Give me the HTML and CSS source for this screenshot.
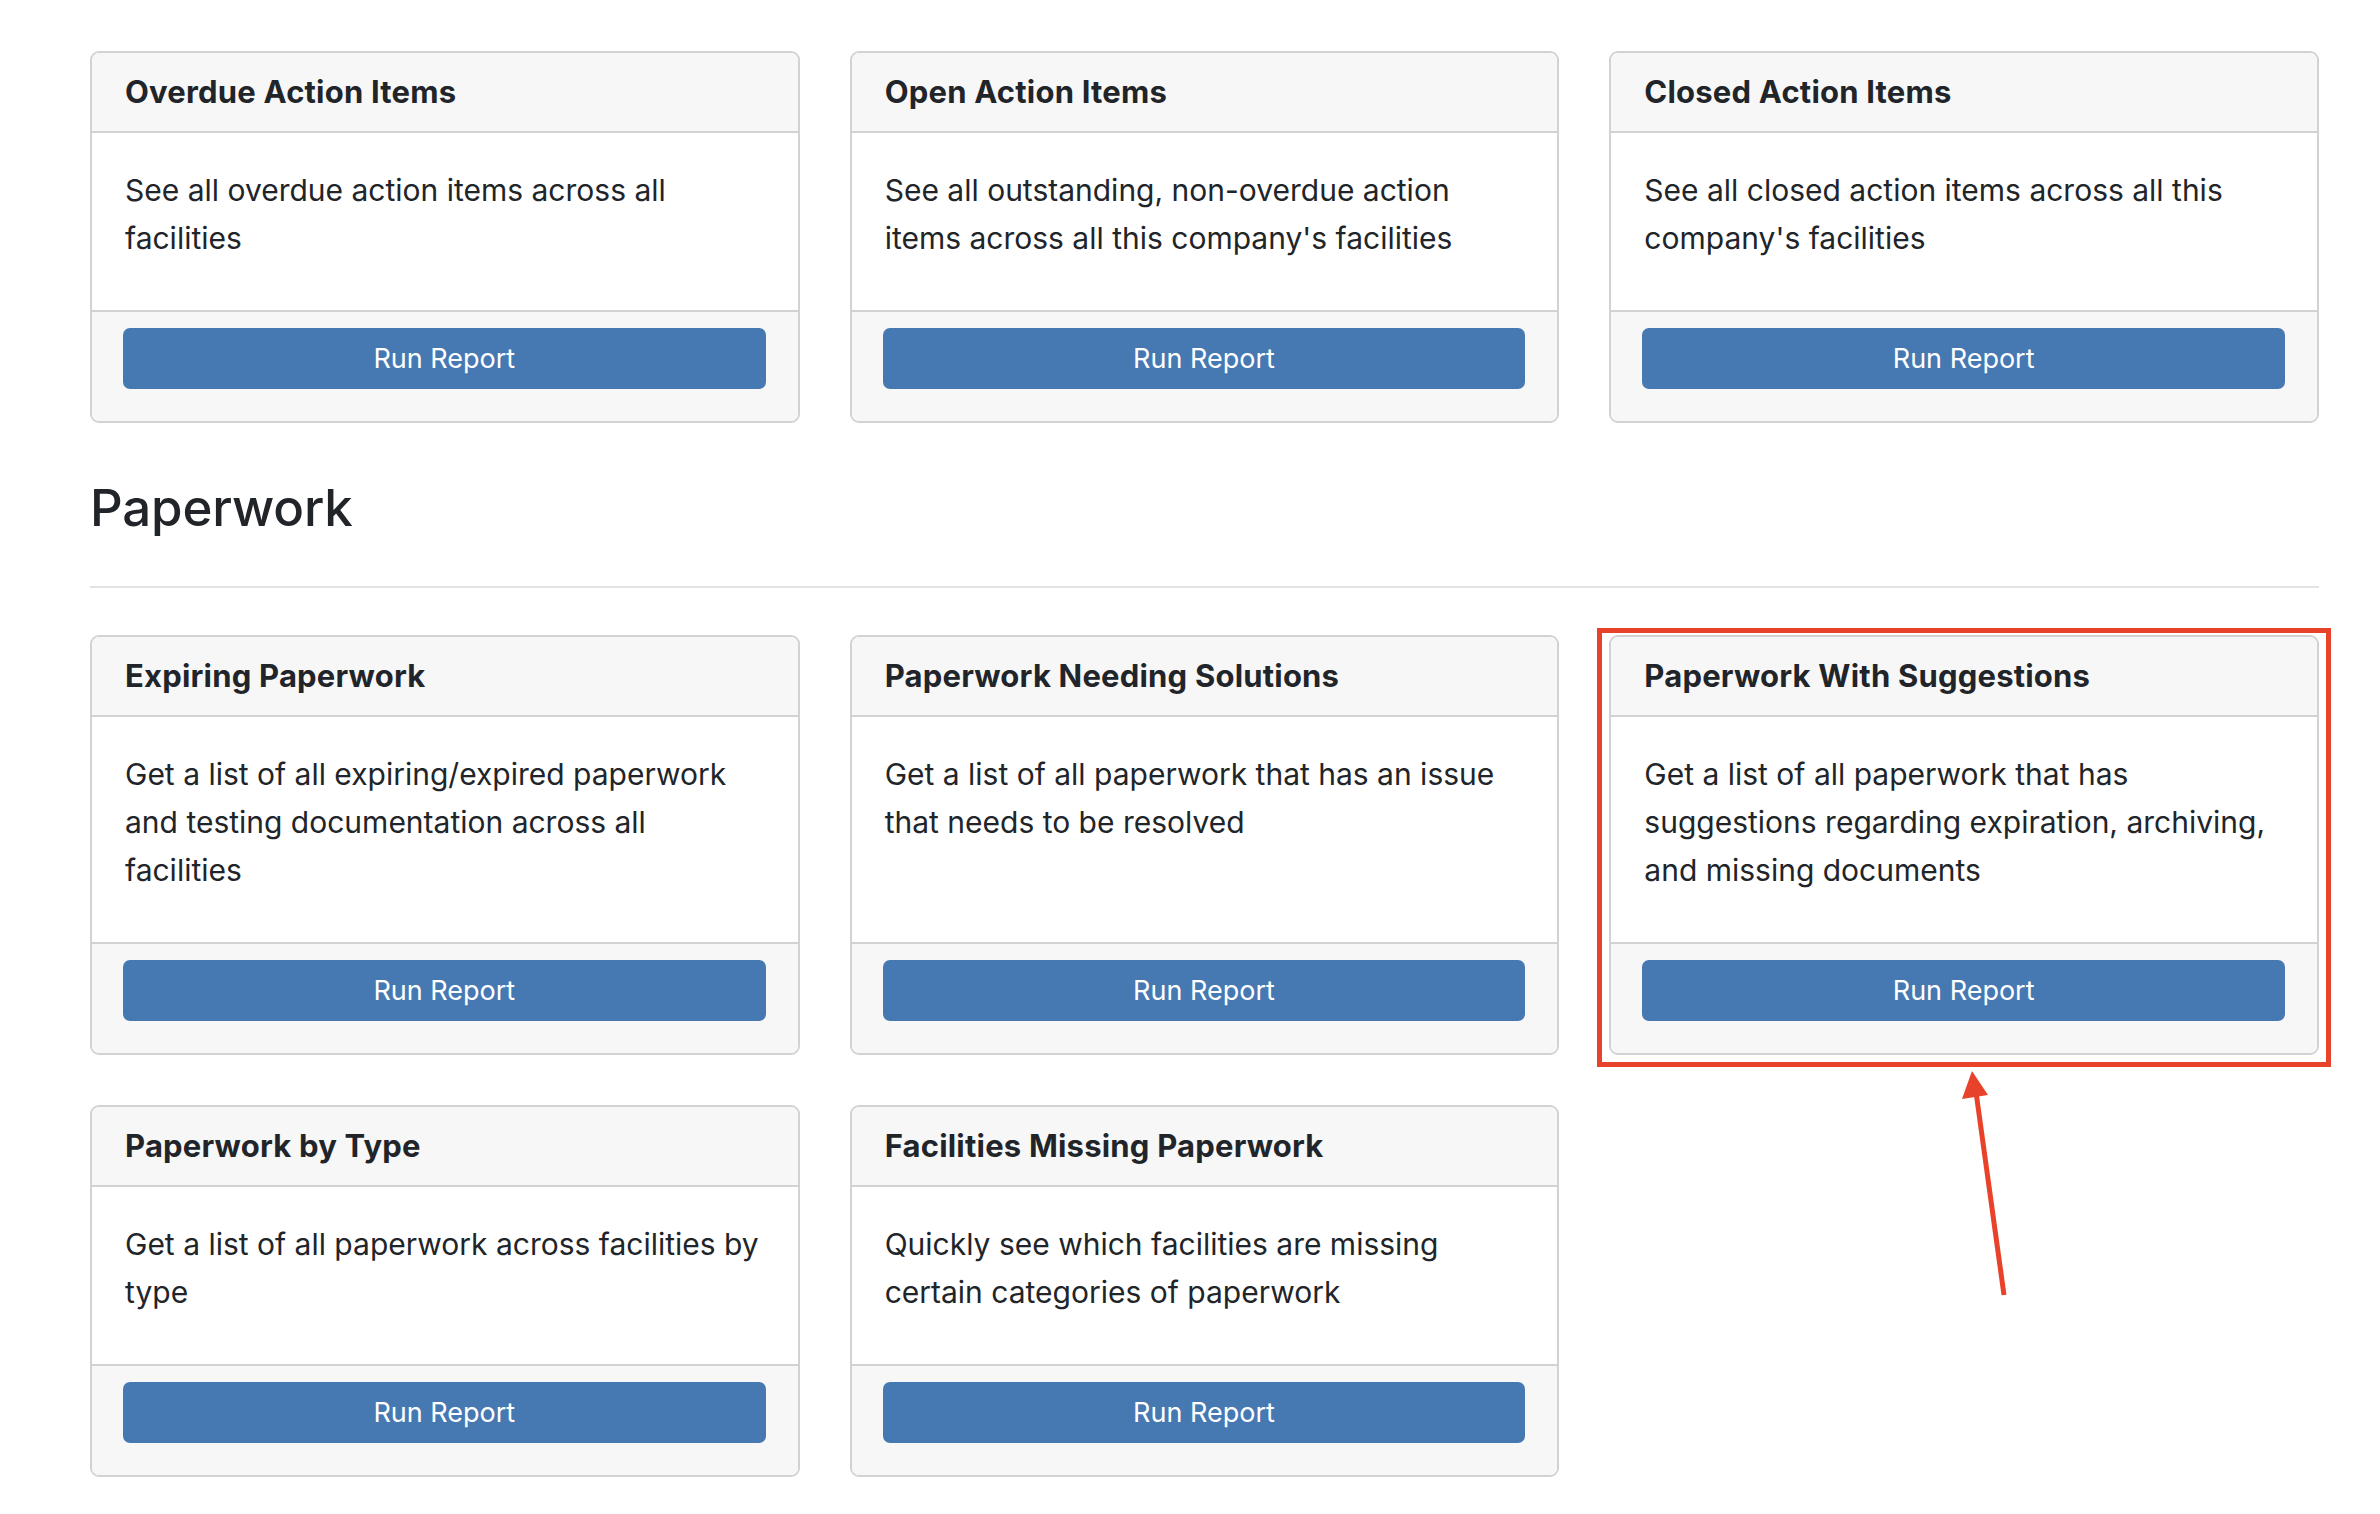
FILE: index.html
```html
<!DOCTYPE html>
<html lang="en">
<head>
<meta charset="utf-8">
<title>Reports</title>
<link rel="stylesheet" href="styles.css">
</head>
<body>
<main class="page">
  <section class="grid">
    <div class="card">
      <div class="card-header">Overdue Action Items</div>
      <div class="card-body"><p>See all overdue action items across all facilities</p></div>
      <div class="card-footer"><button class="btn">Run Report</button></div>
    </div>
    <div class="card">
      <div class="card-header">Open Action Items</div>
      <div class="card-body"><p>See all outstanding, non-overdue action items across all this company's facilities</p></div>
      <div class="card-footer"><button class="btn">Run Report</button></div>
    </div>
    <div class="card">
      <div class="card-header">Closed Action Items</div>
      <div class="card-body"><p>See all closed action items across all this company's facilities</p></div>
      <div class="card-footer"><button class="btn">Run Report</button></div>
    </div>
  </section>

  <h2 class="section-title">Paperwork</h2>
  <hr class="divider">

  <section class="grid">
    <div class="card">
      <div class="card-header">Expiring Paperwork</div>
      <div class="card-body"><p>Get a list of all expiring/expired paperwork and testing documentation across all facilities</p></div>
      <div class="card-footer"><button class="btn">Run Report</button></div>
    </div>
    <div class="card">
      <div class="card-header">Paperwork Needing Solutions</div>
      <div class="card-body"><p>Get a list of all paperwork that has an issue that needs to be resolved</p></div>
      <div class="card-footer"><button class="btn">Run Report</button></div>
    </div>
    <div class="card highlighted">
      <div class="card-header">Paperwork With Suggestions</div>
      <div class="card-body"><p>Get a list of all paperwork that has suggestions regarding expiration, archiving, and missing documents</p></div>
      <div class="card-footer"><button class="btn">Run Report</button></div>
      <span class="highlight-box"></span>
    </div>
    <div class="card">
      <div class="card-header">Paperwork by Type</div>
      <div class="card-body"><p>Get a list of all paperwork across facilities by type</p></div>
      <div class="card-footer"><button class="btn">Run Report</button></div>
    </div>
    <div class="card">
      <div class="card-header">Facilities Missing Paperwork</div>
      <div class="card-body"><p>Quickly see which facilities are missing certain categories of paperwork</p></div>
      <div class="card-footer"><button class="btn">Run Report</button></div>
    </div>
  </section>
</main>

<svg class="arrow" width="2380" height="1514" viewBox="0 0 2380 1514" aria-hidden="true">
  <line x1="2004" y1="1295" x2="1976" y2="1092" stroke="#e8432a" stroke-width="5" stroke-linecap="butt"/>
  <polygon points="1972,1071 1962,1099 1988,1095" fill="#e8432a"/>
</svg>
</body>
</html>
```
FILE: styles.css
```css
* { box-sizing: border-box; }

html, body {
  margin: 0;
  padding: 0;
  background: #ffffff;
}

body {
  font-family: "Inter", "Liberation Sans", sans-serif;
  color: #212529;
  position: relative;
  min-height: 1514px;
}

.page {
  padding: 51px 61px 0 90px;
}

.grid {
  display: grid;
  grid-template-columns: repeat(3, 1fr);
  column-gap: 50px;
  row-gap: 50px;
}

.card {
  position: relative;
  display: flex;
  flex-direction: column;
  background: #ffffff;
  border: 2px solid #d2d2d2;
  border-radius: 9px;
}

.card-header {
  background: #f7f7f7;
  border-bottom: 2px solid #d2d2d2;
  border-radius: 7px 7px 0 0;
  padding: 21px 33px;
  font-size: 31px;
  line-height: 36px;
  font-weight: 700;
  letter-spacing: 0.2px;
}

.card-body {
  flex: 1;
  padding: 33px 33px 33px 33px;
}

.card-body p {
  margin: 0 0 15px 0;
  font-size: 30px;
  line-height: 48px;
  font-weight: 400;
}

.card-footer {
  background: #f7f7f7;
  border-top: 2px solid #d2d2d2;
  border-radius: 0 0 7px 7px;
  padding: 16px 32px 32px 31px;
}

.btn {
  display: block;
  width: 100%;
  height: 61px;
  border: 0;
  border-radius: 7px;
  background: #4678b1;
  color: #ffffff;
  font-family: "Inter", "Liberation Sans", sans-serif;
  font-size: 27px;
  font-weight: 400;
  line-height: 61px;
  padding: 0;
  text-align: center;
}

.section-title {
  margin: 54px 0 0 0;
  font-size: 51px;
  line-height: 61px;
  font-weight: 500;
  letter-spacing: -0.2px;
}

.divider {
  margin: 48px 0 47px 0;
  border: 0;
  border-top: 2px solid #e1e4e7;
  height: 0;
}

.highlight-box {
  position: absolute;
  left: -14px;
  top: -9px;
  right: -14px;
  bottom: -14px;
  border: 5px solid #e8432a;
  pointer-events: none;
}

.arrow {
  position: absolute;
  left: 0;
  top: 0;
  pointer-events: none;
}
```
